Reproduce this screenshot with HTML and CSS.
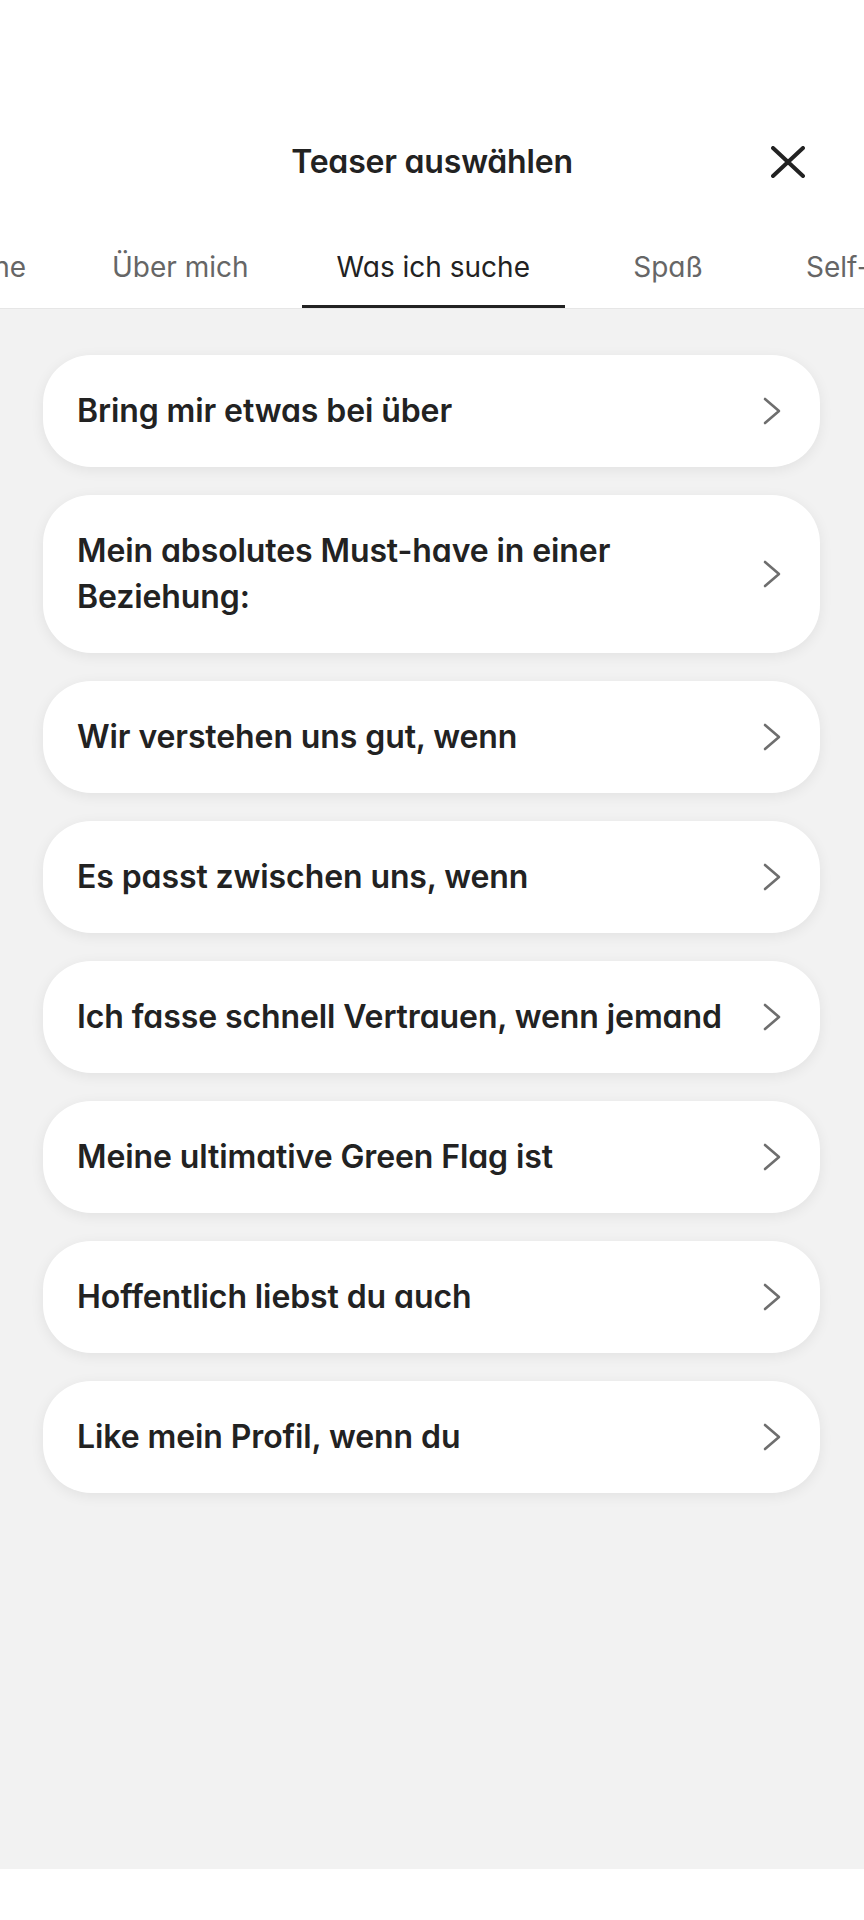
FILE: index.html
```html
<!DOCTYPE html>
<html lang="de">
<head>
<meta charset="utf-8">
<title>Teaser auswählen</title>
<link rel="stylesheet" href="styles.css">
</head>
<body>
<div class="screen">
  <header class="header">
    <div class="topbar">
      <div class="side"></div>
      <h1 class="title">Teaser auswählen</h1>
      <div class="side side-right">
        <button class="close" aria-label="Schließen">
          <svg width="34" height="32" viewBox="0 0 34 32"><path d="M2 2 L32 30 M32 2 L2 30" stroke="#222" stroke-width="4" stroke-linecap="round" fill="none"/></svg>
        </button>
      </div>
    </div>
    <nav class="tabs">
      <div class="tab tab-first"><span class="label">Gespräche</span></div>
      <div class="tab"><span class="label">Über mich</span></div>
      <div class="tab active"><span class="label">Was ich suche</span></div>
      <div class="tab"><span class="label">Spaß</span></div>
      <div class="tab"><span class="label">Self-Care</span></div>
    </nav>
  </header>
  <main class="list">
    <div class="card"><span class="card-text">Bring mir etwas bei über</span><svg class="chev" width="18" height="28" viewBox="0 0 18 28"><path d="M2 2 L16 14 L2 26" stroke="#6e6e6e" stroke-width="2.6" stroke-linecap="round" stroke-linejoin="round" fill="none"/></svg></div>
    <div class="card"><span class="card-text">Mein absolutes Must-have in einer Beziehung:</span><svg class="chev" width="18" height="28" viewBox="0 0 18 28"><path d="M2 2 L16 14 L2 26" stroke="#6e6e6e" stroke-width="2.6" stroke-linecap="round" stroke-linejoin="round" fill="none"/></svg></div>
    <div class="card"><span class="card-text">Wir verstehen uns gut, wenn</span><svg class="chev" width="18" height="28" viewBox="0 0 18 28"><path d="M2 2 L16 14 L2 26" stroke="#6e6e6e" stroke-width="2.6" stroke-linecap="round" stroke-linejoin="round" fill="none"/></svg></div>
    <div class="card"><span class="card-text">Es passt zwischen uns, wenn</span><svg class="chev" width="18" height="28" viewBox="0 0 18 28"><path d="M2 2 L16 14 L2 26" stroke="#6e6e6e" stroke-width="2.6" stroke-linecap="round" stroke-linejoin="round" fill="none"/></svg></div>
    <div class="card"><span class="card-text">Ich fasse schnell Vertrauen, wenn jemand</span><svg class="chev" width="18" height="28" viewBox="0 0 18 28"><path d="M2 2 L16 14 L2 26" stroke="#6e6e6e" stroke-width="2.6" stroke-linecap="round" stroke-linejoin="round" fill="none"/></svg></div>
    <div class="card"><span class="card-text">Meine ultimative Green Flag ist</span><svg class="chev" width="18" height="28" viewBox="0 0 18 28"><path d="M2 2 L16 14 L2 26" stroke="#6e6e6e" stroke-width="2.6" stroke-linecap="round" stroke-linejoin="round" fill="none"/></svg></div>
    <div class="card"><span class="card-text">Hoffentlich liebst du auch</span><svg class="chev" width="18" height="28" viewBox="0 0 18 28"><path d="M2 2 L16 14 L2 26" stroke="#6e6e6e" stroke-width="2.6" stroke-linecap="round" stroke-linejoin="round" fill="none"/></svg></div>
    <div class="card"><span class="card-text">Like mein Profil, wenn du</span><svg class="chev" width="18" height="28" viewBox="0 0 18 28"><path d="M2 2 L16 14 L2 26" stroke="#6e6e6e" stroke-width="2.6" stroke-linecap="round" stroke-linejoin="round" fill="none"/></svg></div>
  </main>
  <footer class="footer"></footer>
</div>
</body>
</html>
```
FILE: styles.css
```css
* { box-sizing: border-box; }
html, body { margin: 0; padding: 0; background: #fff; }
body {
  font-family: Inter, "Noto Sans", "Liberation Sans", sans-serif;
  font-feature-settings: "cv11" 1;
  color: #222;
}
.screen {
  width: 864px;
  height: 1920px;
  display: flex;
  flex-direction: column;
  overflow: hidden;
}
.header { background: #fff; flex: none; }
.topbar {
  display: grid;
  grid-template-columns: 1fr auto 1fr;
  align-items: center;
  padding-top: 142px;
  padding-bottom: 22px;
}
.title {
  margin: 0;
  font-size: 32px;
  line-height: 40px;
  font-weight: 600;
  letter-spacing: -0.2px;
  color: #222;
}
.side-right { display: flex; justify-content: flex-end; padding-right: 59px; }
.close {
  border: 0; background: none; padding: 0; margin: 0;
  width: 34px; height: 32px; display: block;
}
.close svg { display: block; }
.tabs {
  display: flex;
  white-space: nowrap;
  border-bottom: 1px solid #e6e6e6;
  overflow: hidden;
}
.tab {
  flex: none;
  min-width: 188px;
  padding: 0 9px;
  display: flex;
  justify-content: center;
}
.tab-first { width: 229px; margin-left: -161px; }
.label {
  display: block;
  padding: 46px 35px 21px;
  font-size: 28px;
  line-height: 34px;
  font-weight: 400;
  color: #666;
  border-bottom: 3px solid transparent;
}
.tab.active .label { color: #222; border-bottom-color: #222; }
.list {
  flex: 1;
  background: #f2f2f2;
  padding: 46px 44px 0 43px;
  display: flex;
  flex-direction: column;
  gap: 28px;
}
.card {
  background: #fff;
  border-radius: 48px;
  box-shadow: 0 3px 14px rgba(0, 0, 0, 0.07);
  padding: 33px 39px 33px 34px;
  display: flex;
  align-items: center;
}
.card-text {
  flex: 1;
  font-size: 32px;
  line-height: 46px;
  font-weight: 600;
  letter-spacing: -0.1px;
  color: #222;
  padding-right: 24px;
}
.chev { flex: none; display: block; }
.footer { height: 51px; flex: none; background: #fff; }
```
